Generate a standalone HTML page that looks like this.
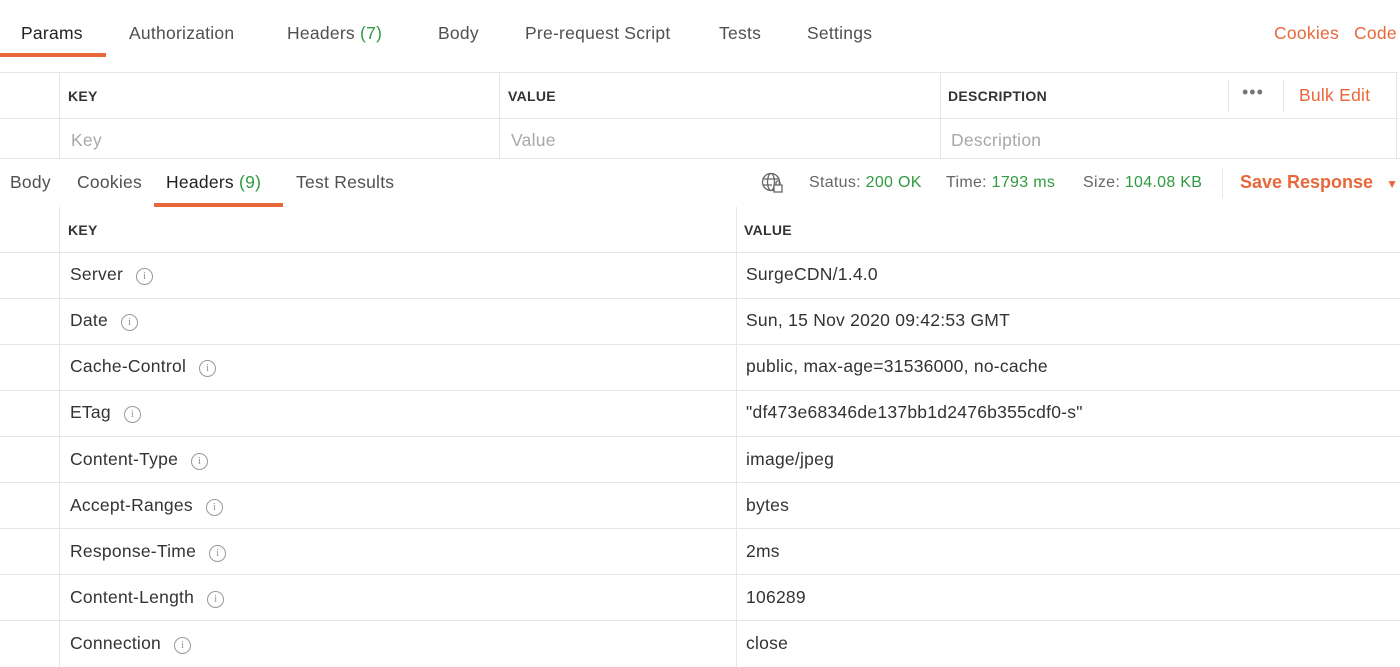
<!DOCTYPE html>
<html><head><style>
*{margin:0;padding:0;box-sizing:border-box}
body{width:1400px;height:667px;overflow:hidden;background:#fff;font-family:"Liberation Sans",sans-serif;color:#505050;position:relative}
.a{position:absolute;white-space:nowrap}
.t{font-size:17.5px;letter-spacing:0.25px}
.g{color:#2f9a3f}
.o{color:#e8683a}
.hl{position:absolute;height:1px;background:#e6e6e6}
.vl{position:absolute;width:1px;background:#e6e6e6}
.h{font-size:14px;font-weight:bold;color:#333;letter-spacing:0.3px}
.ph{color:#a8a8a8;font-size:17.5px;letter-spacing:0.25px}
.i{display:inline-block;width:17px;height:17px;border:1.3px solid #999;border-radius:50%;font-size:11px;color:#999;text-align:center;line-height:15px;font-family:"Liberation Serif",serif;vertical-align:1px;margin-left:13px;letter-spacing:0}
</style></head><body>
<div class="a t" style="left:21px;top:23px;color:#222">Params</div>
<div class="a" style="left:0;top:53px;width:106px;height:4px;background:#e8683a"></div>
<div class="a t" style="left:129px;top:23px">Authorization</div>
<div class="a t" style="left:287px;top:23px">Headers <span class="g">(7)</span></div>
<div class="a t" style="left:438px;top:23px">Body</div>
<div class="a t" style="left:525px;top:23px">Pre-request Script</div>
<div class="a t" style="left:719px;top:23px">Tests</div>
<div class="a t" style="left:807px;top:23px">Settings</div>
<div class="a t o" style="left:1274px;top:23px">Cookies</div>
<div class="a t o" style="left:1354px;top:23px">Code</div>

<div class="hl" style="left:0;top:72px;width:1398px"></div>
<div class="hl" style="left:0;top:118px;width:1398px"></div>
<div class="hl" style="left:0;top:158px;width:1400px"></div>
<div class="vl" style="left:59px;top:72px;height:86px"></div>
<div class="vl" style="left:499px;top:72px;height:86px"></div>
<div class="vl" style="left:940px;top:72px;height:86px"></div>
<div class="vl" style="left:1228px;top:80px;height:32px"></div>
<div class="vl" style="left:1283px;top:80px;height:32px"></div>
<div class="vl" style="left:1396px;top:72px;height:86px"></div>
<div class="a h" style="left:68px;top:88px">KEY</div>
<div class="a h" style="left:508px;top:88px">VALUE</div>
<div class="a h" style="left:948px;top:88px">DESCRIPTION</div>
<div class="a" style="left:1242px;top:82px;font-size:18px;color:#777;letter-spacing:1px">•••</div>
<div class="a t o" style="left:1299px;top:85px">Bulk Edit</div>
<div class="a ph" style="left:71px;top:130px">Key</div>
<div class="a ph" style="left:511px;top:130px">Value</div>
<div class="a ph" style="left:951px;top:130px">Description</div>

<div class="a t" style="left:10px;top:172px">Body</div>
<div class="a t" style="left:77px;top:172px">Cookies</div>
<div class="a t" style="left:166px;top:172px;color:#222">Headers <span class="g">(9)</span></div>
<div class="a" style="left:154px;top:203px;width:129px;height:4px;background:#e8683a"></div>
<div class="a t" style="left:296px;top:172px">Test Results</div>
<svg class="a" style="left:761px;top:172px" width="26" height="22" viewBox="0 0 26 22" fill="none" stroke="#666" stroke-width="1.3"><circle cx="10" cy="10" r="8.5"/><ellipse cx="10" cy="10" rx="3.5" ry="8.5"/><path d="M2 7h16M2 13h9"/><rect x="13" y="13" width="8" height="7" fill="#fff"/><path d="M15 13v-2a2 2 0 0 1 4 0v2"/></svg>
<div class="a" style="left:809px;top:174px;font-size:16px;color:#666;letter-spacing:0.3px">Status: <span class="g">200 OK</span></div>
<div class="a" style="left:946px;top:174px;font-size:16px;color:#666;letter-spacing:0.3px">Time: <span class="g">1793 ms</span></div>
<div class="a" style="left:1083px;top:174px;font-size:16px;color:#666;letter-spacing:0.3px">Size: <span class="g">104.08 KB</span></div>
<div class="vl" style="left:1222px;top:168px;height:30px"></div>
<div class="a o" style="left:1240px;top:172px;font-weight:600;font-size:18px">Save Response <span style="font-size:12px;margin-left:8px">▼</span></div>

<div class="vl" style="left:59px;top:207px;height:460px"></div>
<div class="vl" style="left:736px;top:207px;height:460px"></div>
<div class="a h" style="left:68px;top:222px">KEY</div>
<div class="a h" style="left:744px;top:222px">VALUE</div>
<div class="hl" style="left:0;top:252px;width:1400px"></div>
<div class="hl" style="left:0;top:298px;width:1400px"></div>
<div class="hl" style="left:0;top:344px;width:1400px"></div>
<div class="hl" style="left:0;top:390px;width:1400px"></div>
<div class="hl" style="left:0;top:436px;width:1400px"></div>
<div class="hl" style="left:0;top:482px;width:1400px"></div>
<div class="hl" style="left:0;top:528px;width:1400px"></div>
<div class="hl" style="left:0;top:574px;width:1400px"></div>
<div class="hl" style="left:0;top:620px;width:1400px"></div>

<div class="a t" style="left:70px;top:264px;color:#333">Server<span class="i">i</span></div>
<div class="a t" style="left:746px;top:264px;color:#333">SurgeCDN/1.4.0</div>
<div class="a t" style="left:70px;top:310px;color:#333">Date<span class="i">i</span></div>
<div class="a t" style="left:746px;top:310px;color:#333">Sun, 15 Nov 2020 09:42:53 GMT</div>
<div class="a t" style="left:70px;top:356px;color:#333">Cache-Control<span class="i">i</span></div>
<div class="a t" style="left:746px;top:356px;color:#333">public, max-age=31536000, no-cache</div>
<div class="a t" style="left:70px;top:402px;color:#333">ETag<span class="i">i</span></div>
<div class="a t" style="left:746px;top:402px;color:#333">"df473e68346de137bb1d2476b355cdf0-s"</div>
<div class="a t" style="left:70px;top:449px;color:#333">Content-Type<span class="i">i</span></div>
<div class="a t" style="left:746px;top:449px;color:#333">image/jpeg</div>
<div class="a t" style="left:70px;top:495px;color:#333">Accept-Ranges<span class="i">i</span></div>
<div class="a t" style="left:746px;top:495px;color:#333">bytes</div>
<div class="a t" style="left:70px;top:541px;color:#333">Response-Time<span class="i">i</span></div>
<div class="a t" style="left:746px;top:541px;color:#333">2ms</div>
<div class="a t" style="left:70px;top:587px;color:#333">Content-Length<span class="i">i</span></div>
<div class="a t" style="left:746px;top:587px;color:#333">106289</div>
<div class="a t" style="left:70px;top:633px;color:#333">Connection<span class="i">i</span></div>
<div class="a t" style="left:746px;top:633px;color:#333">close</div>
</body></html>
